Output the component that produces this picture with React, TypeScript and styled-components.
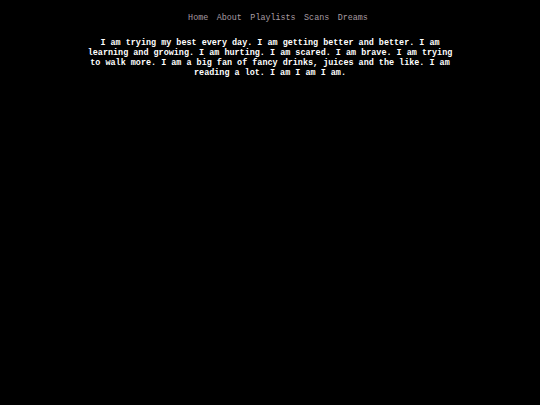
import React from 'react';
import styled, { createGlobalStyle } from 'styled-components';

const GlobalStyle = createGlobalStyle`
  html, body {
    margin: 0;
    padding: 0;
    background: #000;
  }
`;

const Page = styled.div`
  min-height: 405px;
  background: #000;
  font-family: "Liberation Mono", "Courier New", monospace;
  padding-top: 12px;
`;

const Nav = styled.nav`
  display: flex;
  justify-content: center;
  gap: 8.5px;
  padding-left: 16px;
`;

const NavLink = styled.a`
  color: #a89ca2;
  font-size: 8.4px;
  line-height: 12px;
  text-decoration: none;
`;

const Intro = styled.p`
  width: 372px;
  margin: 14px auto 0;
  color: #fff;
  font-weight: bold;
  font-size: 8.45px;
  line-height: 10px;
  text-align: center;
`;

const links = ['Home', 'About', 'Playlists', 'Scans', 'Dreams'];

const App = () => {
  return (
    <Page>
      <GlobalStyle />
      <Nav>
        {links.map((l) => (
          <NavLink key={l} href="#">{l}</NavLink>
        ))}
      </Nav>
      <Intro>
        I am trying my best every day. I am getting better and better. I am learning and growing.
        I am hurting. I am scared. I am brave. I am trying to walk more. I am a big fan of fancy
        drinks, juices and the like. I am reading a lot. I am I am I am.
      </Intro>
    </Page>
  );
};

export default App;
